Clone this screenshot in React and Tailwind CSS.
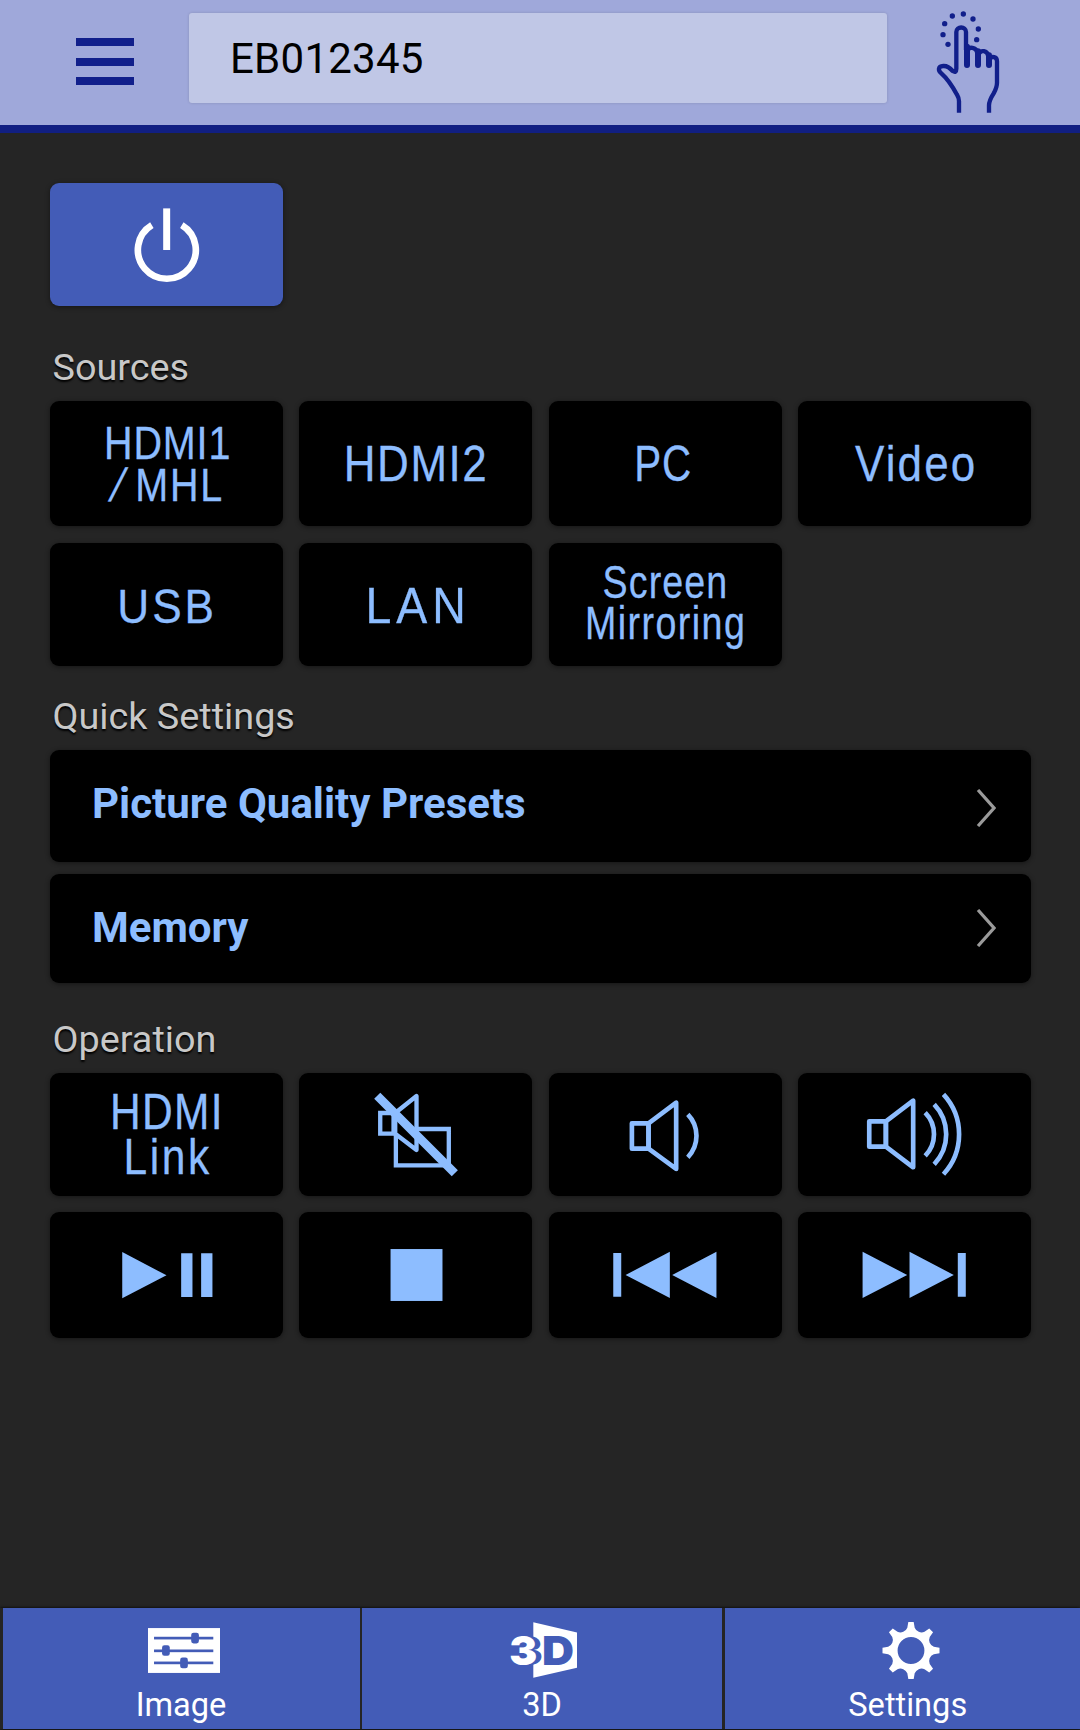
import clsx from 'clsx';

// Outline of the gear, eight teeth with round notches between them
const gearPath = (() => {
  const at = (x, y, deg) => {
    const a = (deg * Math.PI) / 180;
    return `${(x * Math.cos(a) - y * Math.sin(a)).toFixed(1)} ${(x * Math.sin(a) + y * Math.cos(a)).toFixed(1)}`;
  };
  let d = '';
  for (let i = 0; i < 8; i++) {
    const deg = i * 45;
    d += `${i === 0 ? 'M' : 'L'}${at(-8, -85, deg)} L${at(8, -85, deg)} L${at(11, -68, deg)} `;
    d += `A22 22 0 0 0 ${at(-11, -68, deg + 45)} `;
  }
  return `${d}Z M40 0 A40 40 0 1 0 -40 0 A40 40 0 1 0 40 0 Z`;
})();

function TouchIcon() {
  return (
    <svg viewBox="165 30 201 312" className="h-[104px] w-[67px]" fill="none" stroke="#111f8b" strokeWidth="13">
      <path
        d="M237 338V304Q237 294 231 284Q207 240 184 220C174 212 173 199 190 198C204 197 212 206 218 213Q229 220 229 206V96C229 78 258 78 258 96V150"
        strokeLinejoin="round"
      />
      <path d="M264 150C267 140 288 140 292 158M298 160C303 150 321 150 325 168M330 175C335 169 351 169 351 184V248Q351 262 341 280Q327 302 327 316V338" />
      <path d="M261 140V195M294 154V195M327 166V195" strokeWidth="18" strokeLinecap="round" />
      <g fill="#111f8b" stroke="none">
        <circle cx="204" cy="133" r="8" />
        <circle cx="189" cy="104" r="8" />
        <circle cx="194" cy="71" r="8" />
        <circle cx="217" cy="48" r="8" />
        <circle cx="250" cy="42" r="8" />
        <circle cx="279" cy="57" r="8" />
        <circle cx="295" cy="87" r="8" />
        <circle cx="290" cy="119" r="8" />
      </g>
    </svg>
  );
}

function PowerIcon() {
  return (
    <svg viewBox="0 0 700 369" className="h-full w-full">
      <path d="M306 126A87 87 0 1 0 396 126" fill="none" stroke="white" strokeWidth="20" />
      <rect x="340" y="76" width="21" height="125" fill="white" />
    </svg>
  );
}

function MuteIcon() {
  return (
    <svg viewBox="-3 0 700 369" className="h-full w-full" fill="none" stroke="#8dbdff" strokeWidth="13">
      <path d="M241 120H281V182H241Z" />
      <path d="M286 182V120L350 69V231Z" strokeLinejoin="round" />
      <path d="M350 168H447V277H288V182" />
      <path d="M232 68L465 301" strokeWidth="26" />
    </svg>
  );
}

function VolumeDownIcon() {
  return (
    <svg viewBox="0 0 700 369" className="h-full w-full" fill="none" stroke="#8dbdff" strokeWidth="14" strokeLinejoin="round">
      <path d="M249 151H299V227H249Z" />
      <path d="M299 151L382 89V288L299 227Z" />
      <path d="M417 124A93 93 0 0 1 417 253" />
    </svg>
  );
}

function VolumeUpIcon() {
  return (
    <svg viewBox="-2 0 700 369" className="h-full w-full" fill="none" stroke="#8dbdff" strokeWidth="14" strokeLinejoin="round">
      <path d="M212 145H262V221H212Z" />
      <path d="M262 145L344 83V283L262 221Z" />
      <path d="M380 119A93 93 0 0 1 380 249" />
      <path d="M407 94A130 130 0 0 1 407 274" />
      <path d="M435 64A177 177 0 0 1 435 304" />
    </svg>
  );
}

function PlayPauseIcon() {
  return (
    <svg viewBox="0 0 700 378" className="h-full w-full" fill="#8dbdff">
      <path d="M217 120L350 190L217 259ZM394 124h34v131h-34ZM454 124h34v131h-34Z" />
    </svg>
  );
}

function StopIcon() {
  return (
    <svg viewBox="-3 0 700 378" className="h-full w-full" fill="#8dbdff">
      <rect x="272" y="111" width="156" height="156" />
    </svg>
  );
}

function PreviousIcon() {
  return (
    <svg viewBox="0 0 700 378" className="h-full w-full" fill="#8dbdff">
      <path d="M193 123h24v131h-24ZM230 189L363 119V258ZM370 189L503 119V258Z" />
    </svg>
  );
}

function NextIcon() {
  return (
    <svg viewBox="0 0 700 378" className="h-full w-full" fill="#8dbdff">
      <path d="M194 119L328 189L194 258ZM335 119L468 189L335 258ZM480 123h24v131h-24Z" />
    </svg>
  );
}

function ImageIcon() {
  return (
    <svg viewBox="0 0 215 134" className="h-[45px] w-[72px]">
      <rect width="215" height="134" fill="white" />
      <g fill="#435cb7">
        <rect x="18" y="26" width="177" height="8" />
        <rect x="18" y="64" width="177" height="8" />
        <rect x="18" y="100" width="177" height="8" />
        <rect x="129" y="14" width="23" height="32" rx="7" />
        <rect x="42" y="51" width="23" height="32" rx="7" />
        <rect x="96" y="88" width="23" height="32" rx="7" />
      </g>
    </svg>
  );
}

function ThreeDIcon() {
  return (
    <svg viewBox="0 0 201 167" className="mr-[3px] h-14 w-[67px] overflow-visible font-['Inter',sans-serif] font-black" fontSize="121">
      <path d="M70 0L201 31V137L70 167Z" fill="white" />
      <text x="14" y="128" fill="#435cb7" textLength="84" lengthAdjust="spacingAndGlyphs">3</text>
      <text x="-2" y="129" fill="white" textLength="84" lengthAdjust="spacingAndGlyphs">3</text>
      <text x="96" y="128" fill="#435cb7" textLength="96" lengthAdjust="spacingAndGlyphs">D</text>
    </svg>
  );
}

function GearIcon() {
  return (
    <svg viewBox="-86 -85 172 170" className="ml-0.5 h-[57px] w-[58px]">
      <path d={gearPath} fill="white" fillRule="evenodd" />
    </svg>
  );
}

function Tile({ children, className }) {
  return (
    <button
      className={clsx(
        'flex flex-col items-center justify-center overflow-hidden rounded-[9px] text-[#8dbdff] shadow-[0_1px_5px_rgba(0,0,0,0.45)]',
        className || 'bg-black',
      )}
    >
      {children}
    </button>
  );
}

function Label({ children, className }) {
  return (
    <span className={clsx("block whitespace-nowrap font-['Liberation_Sans',sans-serif] [-webkit-text-stroke:0.3px_#8dbdff]", className)}>
      {children}
    </span>
  );
}

function Heading({ children, className }) {
  return (
    <h2 className={clsx('mb-4 pl-[2.5px] text-[37.8px] leading-9 text-[#c8c8c8] [text-shadow:0_2px_2px_black]', className)}>
      {children}
    </h2>
  );
}

function SettingRow({ title, className, titleClass, chevronClass }) {
  return (
    <button className={clsx('flex w-full items-center justify-between rounded-[9px] bg-black pr-[35px] pl-[42px] shadow-[0_1px_5px_rgba(0,0,0,0.45)]', className)}>
      <span className={clsx('text-[42px] leading-[48px] font-bold text-[#8dbdff]', titleClass)}>{title}</span>
      <svg viewBox="0 0 20 38" className={clsx('h-[38px] w-5', chevronClass)} fill="none" stroke="#9a9a9a" strokeWidth="3.2">
        <path d="M2 1L18 19L2 37" />
      </svg>
    </button>
  );
}

function Tab({ icon, label, className }) {
  return (
    <button className={clsx('flex h-[121px] flex-col items-center bg-[#435cb7] text-white', className)}>
      <span className="mt-3.5 flex h-14 items-center pl-[5px]">{icon}</span>
      <span className="mt-[11px] text-[32.6px] leading-8">{label}</span>
    </button>
  );
}

function App() {
  return (
    <div className="flex h-[1730px] w-[1080px] flex-col overflow-hidden bg-[#252525] font-['Roboto',sans-serif]">
      <header className="flex h-[133px] shrink-0 border-b-8 border-[#111f82] bg-[#9fa8da]">
        <button className="mt-[38px] ml-[76px] flex h-[47px] w-[58px] flex-col justify-between" aria-label="Menu">
          <span className="h-2 w-full bg-[#111f8b]" />
          <span className="h-2 w-full bg-[#111f8b]" />
          <span className="h-2 w-full bg-[#111f8b]" />
        </button>
        <div className="mt-[12.5px] ml-[55px] flex h-[90px] w-[698px] items-center rounded-[3px] bg-[#c0c7e6] pt-px pl-[41px] text-[42px] tracking-[0.25px] text-black shadow-[0_0_3px_rgba(0,0,0,0.15)]">
          EB012345
        </div>
        <button className="mt-2.5 ml-12 h-[104px]" aria-label="Touch pad">
          <TouchIcon />
        </button>
      </header>

      <main className="grow pt-[50px] pr-[49px] pl-[50px]">
        <div className="grid h-[123px] grid-cols-4 gap-x-[16.3px]">
          <Tile className="bg-[#435cb7]"><PowerIcon /></Tile>
        </div>

        <Heading className="mt-[43px]">Sources</Heading>
        <div className="grid grid-cols-4 grid-rows-[125px_123px] gap-x-[16.3px] gap-y-[17px]">
          <Tile>
            <Label className="scale-x-85 pl-[3px] text-[46.5px] leading-[42px] tracking-[1px]">HDMI1</Label>
            <Label className="scale-x-85 pl-[5px] text-[46.5px] leading-[42px] tracking-[2px]">
              <span className="mr-3 inline-block -skew-x-[18deg]">/</span>MHL
            </Label>
          </Tile>
          <Tile>
            <Label className="scale-x-87 text-[50.5px] tracking-[1.8px]">HDMI2</Label>
          </Tile>
          <Tile>
            <Label className="scale-x-80 text-[50.5px] tracking-[1px] -ml-1">PC</Label>
          </Tile>
          <Tile>
            <Label className="scale-x-87 pl-[3px] text-[50.5px] tracking-[2.5px]">Video</Label>
          </Tile>
          <Tile>
            <Label className="scale-x-92 pt-1 pl-px text-[48px] tracking-[3.2px]">USB</Label>
          </Tile>
          <Tile>
            <Label className="scale-x-92 pt-0.5 pl-[5px] text-[50.5px] tracking-[5.5px]">LAN</Label>
          </Tile>
          <Tile>
            <Label className="scale-x-80 pl-[2px] text-[47px] leading-[41px] tracking-[1.4px]">Screen</Label>
            <Label className="mb-1.5 scale-x-80 pl-[2px] text-[47px] leading-[41px] tracking-[1.8px]">Mirroring</Label>
          </Tile>
        </div>

        <Heading className="mt-8">Quick Settings</Heading>
        <div className="flex flex-col gap-[11.5px]">
          <SettingRow title="Picture Quality Presets" className="h-[112px]" titleClass="mb-[5px]" chevronClass="mt-[3px]" />
          <SettingRow title="Memory" className="h-[109.5px]" chevronClass="mb-px" />
        </div>

        <Heading className="mt-[38px]">Operation</Heading>
        <div className="grid grid-cols-4 grid-rows-[123px_126px] gap-x-[16.3px] gap-y-4">
          <Tile>
            <Label className="scale-x-85 pl-[2px] text-[50px] leading-[45px] tracking-[1.6px]">HDMI</Label>
            <Label className="scale-x-85 pl-[3px] text-[50px] leading-[45px] tracking-[3px]">Link</Label>
          </Tile>
          <Tile><MuteIcon /></Tile>
          <Tile><VolumeDownIcon /></Tile>
          <Tile><VolumeUpIcon /></Tile>
          <Tile><PlayPauseIcon /></Tile>
          <Tile><StopIcon /></Tile>
          <Tile><PreviousIcon /></Tile>
          <Tile><NextIcon /></Tile>
        </div>
      </main>

      <nav className="mb-px flex shrink-0 gap-[2.5px] pl-[2.5px] shadow-[0_0_3px_black]">
        <Tab icon={<ImageIcon />} label="Image" className="w-[357px]" />
        <Tab icon={<ThreeDIcon />} label="3D" className="w-[360px]" />
        <Tab icon={<GearIcon />} label="Settings" className="grow pl-[11px]" />
      </nav>
    </div>
  );
}

export default App;
